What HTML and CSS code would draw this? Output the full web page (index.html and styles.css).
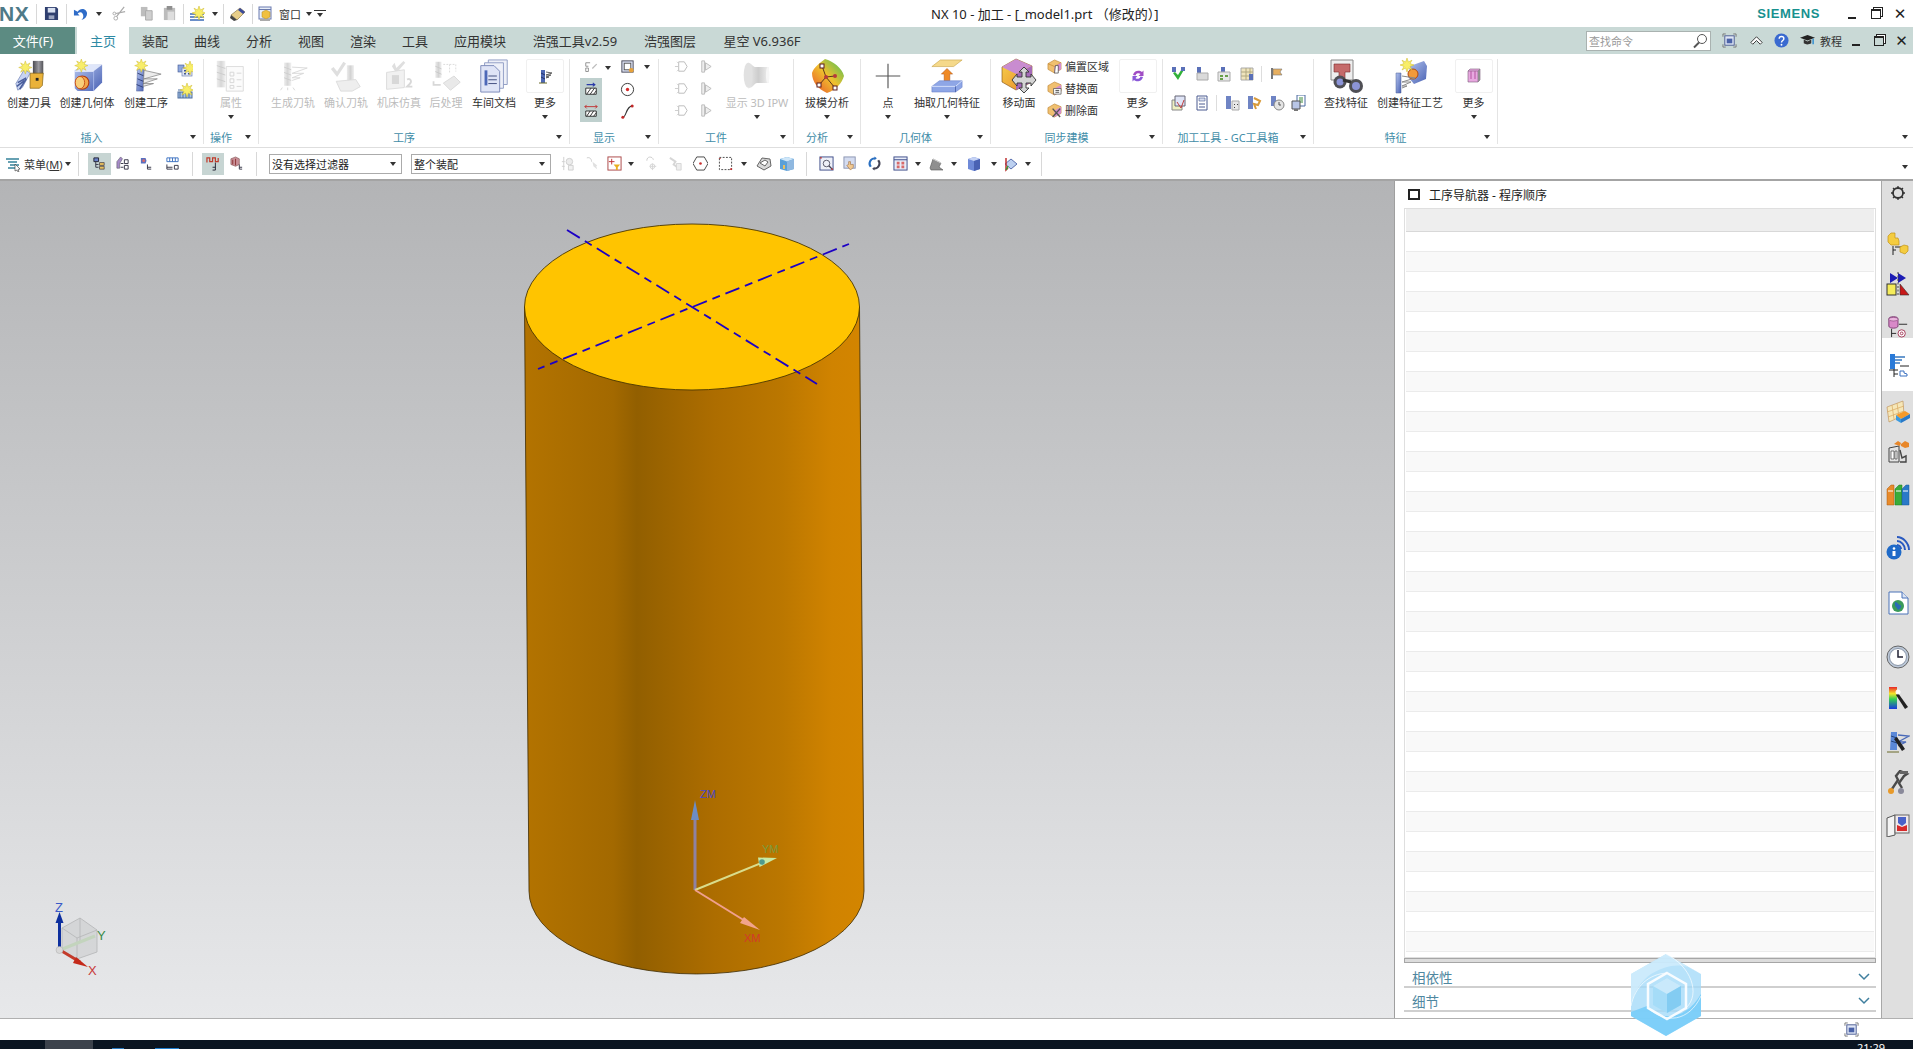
FILE: index.html
```html
<!DOCTYPE html>
<html lang="zh">
<head>
<meta charset="utf-8">
<title>NX 10</title>
<link rel="stylesheet" href="styles.css">
</head>
<body>
<svg class="defs" xmlns="http://www.w3.org/2000/svg">
<defs>
<linearGradient id="gb" x1="0" y1="0" x2="1" y2="1"><stop offset="0" stop-color="#b4c4ee"/><stop offset="1" stop-color="#4a62b4"/></linearGradient>
<linearGradient id="gg" x1="0" y1="0" x2="1" y2="0"><stop offset="0" stop-color="#e2e2e2"/><stop offset=".5" stop-color="#bcbcbc"/><stop offset="1" stop-color="#e8e8e8"/></linearGradient>
<linearGradient id="gd" x1="0" y1="0" x2="1" y2="0"><stop offset="0" stop-color="#4a4a50"/><stop offset=".55" stop-color="#9a9aa0"/><stop offset="1" stop-color="#55555a"/></linearGradient>
<linearGradient id="gr" x1="0" y1="1" x2="1" y2="0"><stop offset="0" stop-color="#e8502a"/><stop offset=".5" stop-color="#f0c02e"/><stop offset="1" stop-color="#3fc05a"/></linearGradient>
<linearGradient id="gc" x1="0" y1="0" x2="0" y2="1"><stop offset="0" stop-color="#e8242a"/><stop offset=".3" stop-color="#f4e52a"/><stop offset=".55" stop-color="#33d052"/><stop offset="1" stop-color="#1a38e0"/></linearGradient>
<linearGradient id="go" x1="0" y1="0" x2="1" y2="1"><stop offset="0" stop-color="#f7d34a"/><stop offset="1" stop-color="#e8872a"/></linearGradient>
<linearGradient id="side" gradientUnits="userSpaceOnUse" x1="525" y1="0" x2="864" y2="0"><stop offset="0" stop-color="#b37300"/><stop offset=".26" stop-color="#a36900"/><stop offset=".33" stop-color="#925f00"/><stop offset=".56" stop-color="#ad6d00"/><stop offset=".76" stop-color="#bb7700"/><stop offset=".905" stop-color="#d08300"/><stop offset="1" stop-color="#d38500"/></linearGradient>
<linearGradient id="sky" x1="0" y1="0" x2="0" y2="1"><stop offset="0" stop-color="#b3b4b6"/><stop offset="1" stop-color="#e7e8ea"/></linearGradient>
<path id="star" d="M7 0l1.400 4L12 2.200 10 5.600 14 7l-4 1.400L12 12 8.400 10 7 14 5.600 10 2 12l2-3.600L0 7l4-1.400L2 2.200 5.600 4z" fill="#f8ee6a" stroke="#cdb92a" stroke-width=".5"/>
</defs>
<symbol id="tool" viewBox="0 0 36 36"><rect x="20" y="2" width="11" height="14" fill="url(#gd)"/><path d="M17 15h14l-1 13-3 3H17z" fill="#eab23a" stroke="#7d5c10" stroke-width=".7"/><rect x="23" y="20" width="3" height="3" fill="#222"/><path d="M4 33l-2-7 9-15 6 4-8 15z" fill="#c8d4f2" stroke="#5a6ea8" stroke-width=".6"/><path d="M4 25l9-5M3 29l8-6M6 32l7-11" stroke="#4a5e9c" stroke-width="1.700" fill="none"/><use href="#star" x="5" y="2" width="14" height="14"/></symbol>
<symbol id="geom" viewBox="0 0 36 36"><path d="M5 12l10-6h19v19l-9 9H8l-3-3z" fill="url(#gb)"/><path d="M5 13l9-7h20l-9 7z" fill="#dfe6fa"/><path d="M25 13v21" stroke="#a6b6e8"/><path d="M5 13h20" stroke="#eef2ff"/><ellipse cx="13" cy="25" rx="7" ry="7" fill="#f4a84a" stroke="#b03a10" stroke-width="1.200"/><ellipse cx="10.500" cy="25" rx="5" ry="6.500" fill="#f9cf7a" stroke="#c8501a"/><use href="#star" x="5" y="0" width="14" height="14"/></symbol>
<symbol id="oper" viewBox="0 0 36 36"><path d="M9 11h7l-1 23H8z" fill="url(#gb)" stroke="#4a5c96" stroke-width=".5"/><path d="M9 15l7 3M9 21l7 3M8 27l7 3" stroke="#2f3f78"/><path d="M16 12l18 4-18 5 14 0-15 5 11 0-11 3z" fill="#ececec" stroke="#777" stroke-width=".7"/><use href="#star" x="6" y="0" width="14" height="14"/></symbol>
<symbol id="prop" viewBox="0 0 36 36" opacity=".6"><path d="M3 2h9v28H3z" fill="url(#gg)"/><path d="M3 7l9 3M3 14l9 3M3 21l9 3" stroke="#aaa"/><path d="M13 8h18v26H13z" fill="#fafafa" stroke="#c4c4c4"/><path d="M17 14h4v4h-4zM24 15h5M17 21h4v4h-4zM24 22h5M17 28h4v3h-4zM24 29h5" stroke="#bbb" fill="none"/></symbol>
<symbol id="gen" viewBox="0 0 36 36" opacity=".6"><path d="M8 3h8v26H8z" fill="url(#gg)"/><path d="M8 8l8 3M8 14l8 3M8 20l8 3" stroke="#aaa"/><path d="M17 8l17 1-17 6 13 0-13 5 9 0-9 3" fill="none" stroke="#bdbdbd"/><path d="M6 31l-2 3M12 31v3M18 31l2 3" stroke="#bbb"/></symbol>
<symbol id="ver" viewBox="0 0 36 36" opacity=".65"><path d="M4 8l4 5 7-11 3 2-10 15-7-9z" fill="#cfcfcf"/><path d="M19 6h8v20h-8z" fill="url(#gg)"/><path d="M7 24l22-2 5 8-9 5H12z" fill="#e6e6e6" stroke="#c8c8c8"/></symbol>
<symbol id="sim" viewBox="0 0 36 36" opacity=".65"><path d="M13 3l2 6 8-8 2 2-10 12-5-8z" fill="#cfcfcf"/><path d="M4 14l20-3v20L4 33z" fill="#ebebeb" stroke="#c8c8c8"/><path d="M10 17h8v10h-8z" fill="#c4c4c4"/><path d="M27 22c4-2 6 2 3 5l-3 3h6" stroke="#c4c4c4" stroke-width="2" fill="none"/></symbol>
<symbol id="post" viewBox="0 0 36 36" opacity=".65"><path d="M6 2h7v18H6z" fill="url(#gg)"/><path d="M6 7l7 3M6 13l7 3" stroke="#aaa"/><path d="M15 5h14M22 5v10M29 5v8" stroke="#c6c6c6" stroke-dasharray="2 1.500" fill="none"/><path d="M4 24v4l8 0" stroke="#c4c4c4" stroke-width="2" fill="none"/><path d="M15 26l12-8 7 7-11 9z" fill="#dedede" stroke="#c4c4c4"/></symbol>
<symbol id="doc" viewBox="0 0 36 36"><path d="M12 1h20v26H12z" fill="#eef0f8" stroke="#8f9cc4"/><path d="M8 4h20v27H8z" fill="#eef0f8" stroke="#8f9cc4"/><path d="M4 7h14l6 6v22H4z" fill="#dfe4f6" stroke="#7a88b8"/><path d="M8 12h3v16H8z" fill="#4d68b8"/><path d="M12 18h9M12 22h9M12 26h9" stroke="#3e4a7c"/></symbol>
<symbol id="more" viewBox="0 0 16 16"><path d="M4 2h4v13H4z" fill="#4e68b4"/><path d="M4 5l4 2M4 9l4 2" stroke="#24346c"/><path d="M9 4l6 1-6 2h5l-5 2h3l-3 1" stroke="#555" fill="none" stroke-width=".9"/><path d="M2 15h8" stroke="#6a6a2a"/></symbol>
<symbol id="ipw" viewBox="0 0 36 36" opacity=".75"><path d="M8 3c4 0 5 5 9 5h14v18H18c-3 0-5 6-10 6z" fill="url(#gg)"/><ellipse cx="8" cy="17" rx="5" ry="14" fill="#d8d8d8"/><ellipse cx="30" cy="17" rx="2" ry="9" fill="#f3f3f3"/></symbol>
<symbol id="draft" viewBox="0 0 36 36"><path d="M16 1c8 2 17 9 19 17-2 7-8 14-17 17C9 31 3 24 3 15 5 9 11 5 16 1z" fill="url(#gr)"/><path d="M13 8l4 11-7 8M17 19l9 11M17 19l9-1" fill="none" stroke="#4a2a1a" stroke-width=".9"/><rect x="11" y="6" width="4" height="4" fill="#fff" stroke="#5a1f1f"/><circle cx="26" cy="18" r="2" fill="#b83a3a"/><circle cx="17" cy="19" r="2" fill="#b83a3a"/><rect x="24" y="28" width="4" height="4" fill="#fff" stroke="#5a1f1f"/><rect x="8" y="25" width="4" height="4" fill="#fff" stroke="#5a1f1f"/></symbol>
<symbol id="point" viewBox="0 0 36 36"><path d="M18 5v26M5 18h26" stroke="#555" stroke-width="1.200"/></symbol>
<symbol id="extract" viewBox="0 0 36 36"><path d="M2 8l9-7h23l-9 7z" fill="#f5d98a" stroke="#c4a040" stroke-width=".6"/><path d="M18 10l6 6h-3v7h-6v-7h-3z" fill="#f08a24" stroke="#a84c10" stroke-width=".5"/><path d="M2 29l8-6h24v7l-7 5H2z" fill="#8ea6e6" stroke="#5a72c0" stroke-width=".5"/><path d="M2 29h25l7-6" fill="none" stroke="#d6e0fa"/><path d="M27 29v6" stroke="#5067b0"/></symbol>
<symbol id="moveface" viewBox="0 0 36 36"><path d="M15 1l16 7v16L15 32 1 24V9z" fill="url(#go)" stroke="#7a4a10" stroke-width=".6"/><path d="M15 1l16 7-16 8L1 9z" fill="#c98cd0"/><path d="M31 8v16L15 32V16z" fill="#a56ab8"/><path d="M23 9l5 5h-3v5h5v-3l5 6-5 6v-3h-5v5h3l-5 5-5-5h3v-5h-5v3l-5-6 5-6v3h5v-5h-3z" fill="#d4d4d4" stroke="#333" stroke-width=".9"/></symbol>
<symbol id="refresh" viewBox="0 0 16 16"><path d="M3 7a5.500 5.500 0 0 1 9-3l1.500-1.500V8H8.500l2-2a3 3 0 0 0-5 1.500z" fill="#a04cc4"/><path d="M13 9a5.500 5.500 0 0 1-9 3l-1.500 1.500V8h5l-2 2a3 3 0 0 0 5-1.500z" fill="#8a58d8"/></symbol>
<symbol id="find" viewBox="0 0 36 36"><path d="M3 2h22v20H3z" fill="#eee" stroke="#888"/><path d="M6 6h16v8h-5v8h-6v-8H6z" fill="#c56a6a" stroke="#7a2a2a" stroke-width=".6"/><circle cx="12" cy="24" r="6.500" fill="#4f4f55"/><circle cx="28" cy="28" r="7" fill="#4f4f55"/><circle cx="28" cy="28" r="4" fill="#8c94d8"/><circle cx="12" cy="24" r="3.500" fill="#8c94d8"/><path d="M15 22l8 2" stroke="#333" stroke-width="3"/></symbol>
<symbol id="featp" viewBox="0 0 36 36"><path d="M18 8l14-5 3 5-1 13-12 5-6-7z" fill="url(#gb)"/><circle cx="21" cy="16" r="5" fill="#f29a3a" stroke="#b04a10"/><path d="M4 15h5v20H4z" fill="url(#gb)" stroke="#4a5c96" stroke-width=".5"/><path d="M10 18l13 2-13 4 9 0-9 4 5 0-5 2" fill="none" stroke="#8a8a8a"/><use href="#star" x="8" y="0" width="13" height="13"/></symbol>
<symbol id="purple" viewBox="0 0 16 16"><path d="M2 3l2-2h10v11l-2 2H2z" fill="#e8a8e0" stroke="#7a5a7a" stroke-width=".6"/><path d="M12 3v11M2 3h10l2-2" stroke="#7a5a7a" fill="none" stroke-width=".6"/><path d="M12 3l2-2v11l-2 2z" fill="#8f8f8f"/><path d="M5 3v8M9 3v8" stroke="#b455a0"/></symbol>
<symbol id="s-oper" viewBox="0 0 16 16"><rect x="1" y="4" width="6" height="7" fill="#8fa8de" stroke="#3e558f" stroke-width=".6"/><rect x="5" y="7" width="10" height="8" fill="#dfe6f6" stroke="#6f80b0" stroke-width=".7"/><path d="M7 9h2v1.500H7zM11 9h2v1.500h-2zM7 12h2v1.500H7zM11 12h2v1.500h-2z" fill="#3e558f"/><use href="#star" x="6" y="0" width="9" height="9"/></symbol>
<symbol id="s-prog" viewBox="0 0 16 16"><rect x="1" y="9" width="14" height="6" fill="#a8c6e8" stroke="#4f6f9f"/><path d="M3 9v6M6 9v6M9 9v6M12 9v6" stroke="#4f6f9f"/><path d="M1 7h14" stroke="#4f6f9f"/><use href="#star" x="3" y="0" width="9" height="9"/></symbol>
<symbol id="d-a" viewBox="0 0 16 16"><path d="M2 2h5M2 2v4h3M2 8h3v4H2z" stroke="#888" fill="none"/><path d="M9 8l5-5 1 1-5 5z" fill="#bbb"/></symbol>
<symbol id="d-b" viewBox="0 0 16 16"><rect x="2" y="2" width="12" height="12" fill="#dce2f4" stroke="#445"/><rect x="4.500" y="4.500" width="7" height="7" fill="#fff" stroke="#555"/><circle cx="12" cy="12" r="2.500" fill="#e7a23a"/></symbol>
<symbol id="d-hatch" viewBox="0 0 16 16"><path d="M2 7h12v7H2z" fill="#fff" stroke="#222"/><path d="M3 14l5-7M7 14l5-7M11 14l3-4" stroke="#222"/><path d="M3 3h9m-2-2l2.500 2L10 5" stroke="#2a3aa8" fill="none" stroke-width="1.200"/></symbol>
<symbol id="d-hatch2" viewBox="0 0 16 16"><path d="M2 8h12v6H2z" fill="#fff" stroke="#222"/><path d="M3 14l4-6M7 14l4-6M11 14l3-4" stroke="#222"/><path d="M1 3h14M3 1L1 3l2 2M13 1l2 2-2 2" stroke="#c02828" fill="none"/></symbol>
<symbol id="d-c" viewBox="0 0 16 16"><circle cx="8" cy="8" r="6.500" fill="#fff" stroke="#333"/><circle cx="8" cy="8" r="1.800" fill="#d62a2a"/></symbol>
<symbol id="d-d" viewBox="0 0 16 16"><path d="M3 14c4 0 3-11 10-12" fill="none" stroke="#333" stroke-width="1.200"/><circle cx="3" cy="14" r="1.600" fill="#c02828"/><circle cx="13" cy="2" r="1.600" fill="#c02828"/></symbol>
<symbol id="w-a" viewBox="0 0 16 16"><path d="M5 3h6l3 5-3 5H5z" fill="#fff" stroke="#bbb"/><path d="M1 8h4M3 3l1 1M3 13l1-1" stroke="#ccc"/></symbol>
<symbol id="w-b" viewBox="0 0 16 16"><path d="M4 2h3v12H4zM8 4l6 4-6 4z" fill="#eee" stroke="#bbb"/></symbol>
<symbol id="o-a" viewBox="0 0 16 16"><path d="M1 5l7-4 7 3v7l-7 4-7-4z" fill="#f0c070" stroke="#b87a22" stroke-width=".6"/><path d="M1 5l7 3 7-4" stroke="#b87a22" fill="none" stroke-width=".6"/><path d="M8 8v7l7-4V4z" fill="#d48ccf"/><path d="M9 7h3v8H8z" fill="#fff" stroke="#333" stroke-width=".7"/></symbol>
<symbol id="o-b" viewBox="0 0 16 16"><path d="M1 5l7-4 7 3v7l-7 4-7-4z" fill="#f0c070" stroke="#b87a22" stroke-width=".6"/><path d="M8 8l7-4v7l-7 4z" fill="#d48ccf"/><path d="M7 8h8v6H7z" fill="#fff" stroke="#444" stroke-width=".7"/><path d="M9 10h4M9 12h4" stroke="#444"/></symbol>
<symbol id="o-c" viewBox="0 0 16 16"><path d="M1 5l7-4 7 3v7l-7 4-7-4z" fill="#f0c070" stroke="#b87a22" stroke-width=".6"/><path d="M8 8l7-4v7l-7 4z" fill="#d48ccf"/><path d="M6 6l8 9M14 6l-8 9" stroke="#555" stroke-width="1.500"/></symbol>
<symbol id="gc-v" viewBox="0 0 16 16"><path d="M2 7l5 7 7-12-2-1-5 8-3-3z" fill="#32b13a"/><path d="M1 1h4v5H1zM10 1h4v4h-4z" fill="#5a70b8"/></symbol>
<symbol id="gc-a" viewBox="0 0 16 16"><path d="M3 1h4v7H3z" fill="#5a70b8"/><path d="M3 7h11v7H3z" fill="#dadada" stroke="#aaa"/></symbol>
<symbol id="gc-b" viewBox="0 0 16 16"><path d="M5 1h4v6H5z" fill="#5a70b8"/><path d="M2 6h12v9H2z" fill="#e8e8e8" stroke="#aaa"/><path d="M4 9h3v2H4zM9 9h3v2H9zM4 12h3v2H4z" fill="#6aa04a"/></symbol>
<symbol id="gc-c" viewBox="0 0 16 16"><path d="M2 2h12v12H2z" fill="#efe4bc" stroke="#aaa"/><path d="M2 6h12M2 10h12M7 2v12M11 2v12" stroke="#b0a880"/><path d="M10 8h4v6h-4z" fill="#5a70b8"/></symbol>
<symbol id="gc-d" viewBox="0 0 16 16"><path d="M2 2h2v11H2z" fill="#777"/><path d="M4 3h9l-2 3 2 3H4z" fill="#e8b060" stroke="#777" stroke-width=".6"/></symbol>
<symbol id="gc-e" viewBox="0 0 16 16"><path d="M1 5h10v10H1z" fill="#eef0c0" stroke="#888"/><path d="M4 1h10v10H4z" fill="#dfe4f6" stroke="#667"/><path d="M6 7l4 6 3-8" stroke="#c04040" fill="none"/></symbol>
<symbol id="gc-f" viewBox="0 0 16 16"><path d="M3 1h10v14H3z" fill="#fff" stroke="#4a5a90"/><path d="M5 3h6v3H5z" fill="#d8def0" stroke="#4a5a90" stroke-width=".6"/><path d="M5 9h6M5 12h6" stroke="#4a5a90"/></symbol>
<symbol id="gc-g" viewBox="0 0 16 16"><path d="M2 1h5v13H2z" fill="#6f84c4"/><path d="M8 6h7v9H8z" fill="#e8e8e8" stroke="#aaa"/><path d="M10 9h1v1h-1zM13 9h1v1h-1zM10 12h1v1h-1z" fill="#444"/></symbol>
<symbol id="gc-h" viewBox="0 0 16 16"><path d="M2 1h5v13H2z" fill="#6f84c4"/><path d="M8 3l6 3-2 4-4-1 2 5" stroke="#d89a3a" stroke-width="2" fill="none"/></symbol>
<symbol id="gc-i" viewBox="0 0 16 16"><path d="M2 1h5v10H2z" fill="#6f84c4"/><circle cx="10" cy="10" r="5" fill="#e4e4e4" stroke="#888"/><path d="M10 7v3h2" stroke="#555" fill="none"/></symbol>
<symbol id="gc-j" viewBox="0 0 16 16"><path d="M6 0h8v11H6z" fill="#fff" stroke="#4a6aa0"/><path d="M8 3h4M8 5h4M8 7h4" stroke="#3a8a3a"/><path d="M1 6h8v8H1z" fill="#b9c6e6" stroke="#555"/><path d="M3 14h4v2H3z" fill="#777"/></symbol>
<symbol id="t-menu" viewBox="0 0 16 16"><path d="M1 3h13M3 6h9M5 9h9M3 12h7" stroke="#36839a" stroke-width="1.300"/><path d="M10 8l5 5-2 .5 1 2-1 .5-1-2-2 1z" fill="#fff" stroke="#333" stroke-width=".6"/></symbol>
<symbol id="t-a" viewBox="0 0 16 16"><path d="M2 2h5v4H2z" fill="#6a82c8" stroke="#223"/><path d="M4 6v6h3M4 9h3" stroke="#334" fill="none"/><path d="M8 7h5v3H8zM8 11h5v3H8z" fill="#e8c060" stroke="#334" stroke-width=".7"/></symbol>
<symbol id="t-b" viewBox="0 0 16 16"><path d="M2 6l4-5 2 2-3 5v5H2z" fill="#a68ac8" stroke="#556" stroke-width=".6"/><path d="M6 8h3M6 12h3" stroke="#334"/><path d="M10 4h4v4h-4zM10 10h4v4h-4z" fill="#fff" stroke="#334"/></symbol>
<symbol id="t-c" viewBox="0 0 16 16"><path d="M2 2h5l1 3-1 3H2z" fill="#5a70c0"/><circle cx="5" cy="5" r="1.500" fill="#d86a6a"/><path d="M9 9v5h4M9 12h4" stroke="#334" fill="none"/></symbol>
<symbol id="t-d" viewBox="0 0 16 16"><path d="M2 2h12M2 2v4h12V2M5 2v4M8 2v4M11 2v4" fill="none" stroke="#3a70c0"/><path d="M2 9v5h6M2 12h6" stroke="#334" fill="none"/><path d="M10 10h4v4h-4z" fill="#fff" stroke="#334"/></symbol>
<symbol id="t-e" viewBox="0 0 16 16"><path d="M1 7V2h3v4h3V2h3v4h3V2" stroke="#c03a2a" stroke-width="1.300" fill="none"/><path d="M10 7v8M7 12h3M7 15h3" stroke="#223" fill="none"/></symbol>
<symbol id="t-f" viewBox="0 0 16 16"><path d="M2 3l5-2 4 2v6l-4 2-5-2z" fill="#c99098" stroke="#7a4a4a" stroke-width=".6"/><path d="M4 4v5M7 3v7" stroke="#8a3030"/><path d="M11 9v5h3M11 12h3" stroke="#334" fill="none"/></symbol>
<symbol id="t-g" viewBox="0 0 16 16" opacity=".55"><path d="M4 1v14M2 6h3M2 11h3" stroke="#aaa" fill="none"/><circle cx="10" cy="6" r="3.500" fill="#ddd" stroke="#aaa"/><path d="M9 10h5v5H9z" fill="#e6e6e6" stroke="#aaa"/></symbol>
<symbol id="t-h" viewBox="0 0 16 16" opacity=".6"><path d="M2 2c3-1 5 1 5 4" stroke="#aaa" fill="none"/><path d="M8 6l5 4-1 1 1 3-4-3z" fill="#ccc"/></symbol>
<symbol id="t-i" viewBox="0 0 16 16"><rect x="1" y="1" width="14" height="14" fill="#fff" stroke="#a44"/><path d="M5 3v6M2 6h6" stroke="#c03030"/><path d="M7 9h7l-2.500 3v3h-2v-3z" fill="#e8b020"/></symbol>
<symbol id="t-j" viewBox="0 0 16 16" opacity=".6"><path d="M3 5c0-5 6-5 7-1" stroke="#aaa" fill="none"/><path d="M9 8v7M6 11h7" stroke="#bbb"/><circle cx="9" cy="11" r="2.500" fill="none" stroke="#bbb"/></symbol>
<symbol id="t-k" viewBox="0 0 16 16" opacity=".6"><path d="M2 2l6 4-2 3 4 3" stroke="#bbb" fill="none" stroke-width="2"/><path d="M9 8h5v7H9z" fill="#e4e4e4" stroke="#bbb"/></symbol>
<symbol id="t-l" viewBox="0 0 16 16"><path d="M4 1h8l4 7-4 7H4L0 8z" fill="#fff" stroke="#444"/><circle cx="8" cy="8" r="1.400" fill="#c83030"/></symbol>
<symbol id="t-m" viewBox="0 0 16 16"><rect x="1.500" y="1.500" width="13" height="13" fill="none" stroke="#444" stroke-dasharray="2 1.500"/><path d="M1 2h2v1H1zM13 13h2v2h-2z" fill="#c03030"/></symbol>
<symbol id="t-n" viewBox="0 0 16 16"><path d="M1 10l5-8 8 1 1 7-7 4z" fill="#d8d8d8" stroke="#666"/><path d="M4 7l5-3 3 2-3 4z" fill="#fff" stroke="#666"/></symbol>
<symbol id="t-o" viewBox="0 0 16 16"><path d="M1 3l7-2 7 2v10l-7 2-7-2z" fill="#5aa0d8"/><path d="M1 3l7-2 7 2-7 2.500z" fill="#cfe6f8"/><path d="M8 5.500V15l7-2V3z" fill="#8fb8e0"/><path d="M4 9h2v4H4z" fill="#e8c060"/></symbol>
<symbol id="t-p" viewBox="0 0 16 16"><rect x="1" y="1" width="14" height="14" fill="#eef0f8" stroke="#3a4a88"/><circle cx="8" cy="8" r="3.500" fill="none" stroke="#556"/><path d="M10.500 10.500L14 14" stroke="#445" stroke-width="1.500"/><path d="M1 2h2M13 14h2" stroke="#c03030" stroke-width="1.500"/></symbol>
<symbol id="t-q" viewBox="0 0 16 16"><rect x="1" y="1" width="12" height="12" fill="#d4dcf0" stroke="#8a94b0"/><path d="M8 15l-4-5 2-1V6h2v3h3v3z" fill="#f0c890" stroke="#9a6a3a" stroke-width=".6"/></symbol>
<symbol id="t-r" viewBox="0 0 16 16"><path d="M3 12A6.500 6.500 0 0 1 8 1.500v-1l2.500 2L8 4.500v-1A4.500 4.500 0 0 0 5 11z" fill="#2a6fc0"/><path d="M13 4a6.500 6.500 0 0 1-5 10.500v1l-2.500-2L8 11.500v1A4.500 4.500 0 0 0 11 5z" fill="#445"/></symbol>
<symbol id="t-s" viewBox="0 0 16 16"><rect x="1" y="1" width="14" height="14" fill="#e8ecf8" stroke="#3a4a88"/><path d="M1 4h14" stroke="#3a4a88"/><path d="M4 6h3v3H4zM9 6h3v3H9zM4 10h3v3H4zM9 10h3v3H9z" fill="#d86a6a"/></symbol>
<symbol id="t-t" viewBox="0 0 16 16"><path d="M2 12l3-9 8 4-2 4 4 3H3z" fill="#8f8f8f" stroke="#555" stroke-width=".6"/><path d="M5 3l8 4" stroke="#ddd"/></symbol>
<symbol id="t-u" viewBox="0 0 16 16"><path d="M2 3l6-2 6 2v10l-6 2-6-2z" fill="#6f8ad8"/><path d="M2 3l6-2 6 2-6 2z" fill="#c5d2f4"/><path d="M8 5v10l6-2V3z" fill="#4a62b4"/></symbol>
<symbol id="t-v" viewBox="0 0 16 16"><path d="M8 3l6 5-6 5-6-5z" fill="#bcd0f0" stroke="#5a70b0"/><path d="M3 2v12l2-2" stroke="#c03030" fill="none" stroke-width="1.500"/><path d="M3 14l2-4" stroke="#3a9a3a" stroke-width="1.500"/></symbol>
<symbol id="r-gear" viewBox="0 0 16 16"><circle cx="8" cy="8" r="5" fill="none" stroke="#333" stroke-width="1.800"/><path d="M8 1v2M8 13v2M1 8h2M13 8h2M3 3l1.500 1.500M11.500 11.500L13 13M13 3l-1.500 1.500M4.500 11.500L3 13" stroke="#333" stroke-width="1.300"/></symbol>
<symbol id="r-a" viewBox="0 0 24 24"><path d="M2 5l3-3h4v5h3l1 3v4H5L2 11z" fill="#f4cc40" stroke="#c29418" stroke-width=".7"/><path d="M9 16h11M7 15v9M7 19h3" stroke="#222" fill="none"/><path d="M14 16l4-2 4 1v5l-3 3-5-2z" fill="#f4cc40" stroke="#c29418" stroke-width=".7"/></symbol>
<symbol id="r-b" viewBox="0 0 24 24"><path d="M4 1l8 5V1l8 5-8 5 0-5-8 5z" fill="#1c1cb4"/><path d="M12 0v24" stroke="#444" stroke-dasharray="2 1.500"/><rect x="1" y="12" width="9" height="11" fill="#f5ec5a" stroke="#333"/><path d="M14 23V12l9 11z" fill="#c81818" stroke="#333" stroke-width=".6"/></symbol>
<symbol id="r-c" viewBox="0 0 24 24"><path d="M2 3c0-3 10-3 10 0v8c0 3-10 3-10 0z" fill="#d889c8" stroke="#7a3a70"/><ellipse cx="7" cy="3.500" rx="5" ry="2" fill="#eab5de" stroke="#7a3a70" stroke-width=".6"/><path d="M13 9h9M5 14v9M5 19h5" stroke="#222" fill="none"/><circle cx="16" cy="19" r="4" fill="#fff" stroke="#a03050"/><circle cx="16" cy="19" r="1.500" fill="none" stroke="#a03050"/></symbol>
<symbol id="r-d" viewBox="0 0 24 24"><path d="M4 1h5v15H4z" fill="#2a7ad8"/><path d="M9 4h10M9 7l7 0M9 10h5" stroke="#3a7ac0" stroke-width="1.500"/><path d="M3 17h9M8 16v8M8 21h4" stroke="#222" fill="none"/><path d="M14 13h9" stroke="#222"/><path d="M14 18h4v2l3 1v2h-7z" fill="#fff" stroke="#3a70c0"/></symbol>
<symbol id="r-e" viewBox="0 0 24 24"><path d="M1 7L17 1l1 14-15 7z" fill="#f6e7b8" stroke="#b88a50" stroke-width=".6"/><path d="M1 12l17-6M2 17l16-6M6 5l2 14M11 3l2 14" stroke="#d8a860" stroke-width=".7"/><path d="M10 15l9-4 5 3-9 5z" fill="#f59a2a"/><path d="M10 15l5 4v4l-5-3z" fill="#3a9ae0"/><path d="M15 19l9-5v4l-9 5z" fill="#2a7ac8"/></symbol>
<symbol id="r-f" viewBox="0 0 24 24"><path d="M3 8l10-2v16H3z" fill="#e4e4e4" stroke="#444"/><path d="M5 11h3v8H5zM9 11h2v8H9z" fill="#fff" stroke="#444" stroke-width=".7"/><path d="M14 10l2 8 4-2v6h-6" fill="none" stroke="#444" stroke-width="1.400"/><path d="M8 4l4-3 3 2-1 3zM15 4l4-3 4 2v4l-4 1-4-2z" fill="#e8872a"/></symbol>
<symbol id="r-g" viewBox="0 0 24 24"><path d="M1 6l4-4h3v20H1z" fill="#e88a2a" stroke="#a85a10" stroke-width=".5"/><path d="M9 6l4-4h3v20H9z" fill="#3aac3a" stroke="#1a7a1a" stroke-width=".5"/><path d="M16 6l4-4h3v20h-7z" fill="#2a7ac8" stroke="#1a5a98" stroke-width=".5"/><path d="M2 8h5M10 8h5M17 8h5" stroke="#fff"/></symbol>
<symbol id="r-h" viewBox="0 0 24 24"><path d="M11 1c6 0 12 6 12 13M11 5c4 0 8 4 8 9M11 9c2 0 4 2 4 4" stroke="#2a5ac0" stroke-width="2" fill="none"/><circle cx="8" cy="16" r="7.500" fill="#1f6ac8"/><circle cx="8" cy="12.500" r="1.300" fill="#fff"/><path d="M6.500 15h3v5h-3z" fill="#fff"/></symbol>
<symbol id="r-i" viewBox="0 0 24 24"><path d="M3 1h13l6 6v16H3z" fill="#fff" stroke="#4a72b8"/><path d="M16 1v6h6" fill="#dbe4f4" stroke="#4a72b8"/><circle cx="12" cy="15" r="6" fill="#3a9a5a"/><path d="M9 11c3 0 3 3 5 3s1 4-2 5c-1-3-4-3-3-8z" fill="#2a6ab8"/></symbol>
<symbol id="r-j" viewBox="0 0 24 24"><circle cx="12" cy="12" r="11" fill="#bcc8d8" stroke="#666"/><circle cx="12" cy="12" r="8.500" fill="#fff" stroke="#8a96a8"/><path d="M12 5v7h5" stroke="#223" stroke-width="1.500" fill="none"/></symbol>
<symbol id="r-k" viewBox="0 0 24 24"><rect x="3" y="1" width="8" height="22" fill="url(#gc)"/><path d="M12 7l10 14-3 2L10 9z" fill="#222"/><circle cx="12" cy="6" r="2.500" fill="#fff" opacity=".9"/></symbol>
<symbol id="r-l" viewBox="0 0 24 24"><path d="M5 2h6v18H4z" fill="#5a88d8"/><path d="M5 6l6 2M5 11l6 2" stroke="#24447c"/><path d="M12 5l11 1-11 6h8l-8 4" stroke="#4a6ab8" fill="none" stroke-width="1.300"/><path d="M11 7l8 12-3 2-8-12z" fill="#222"/><path d="M1 22h12" stroke="#6a6a2a"/></symbol>
<symbol id="r-m" viewBox="0 0 24 24"><path d="M4 22l8-12-2-4 4-5 7 3-3 2-5 7 3 5" stroke="#4a4a4a" stroke-width="2.400" fill="none"/><circle cx="5" cy="21" r="3" fill="#e89a2a"/><circle cx="15" cy="21" r="3" fill="#8a8a9a"/><path d="M14 1h8v3h-8z" fill="#666"/></symbol>
<symbol id="r-n" viewBox="0 0 24 24"><path d="M1 5l8-3v20l-8 2z" fill="#f4f4f4" stroke="#555"/><rect x="9" y="2" width="14" height="18" fill="#f0e8e8" stroke="#666"/><path d="M12 4h8v6l-4 3-4-3z" fill="#4a62c8"/><path d="M11 12l5 2 5-2v6H11z" fill="#d82a2a"/></symbol>
<symbol id="q-save" viewBox="0 0 16 16"><path d="M1 1h12l2 2v12H1z" fill="#2f3f6f"/><rect x="4" y="2" width="8" height="5" fill="#d8e0f0"/><rect x="5" y="10" width="6" height="4" fill="#9aa4c0"/></symbol>
<symbol id="q-undo" viewBox="0 0 16 16"><path d="M1 4v6h6L5 8c3-3 6-1 6 3 0 2-1 3-2 4 4-1 6-4 6-7 0-5-7-7-10-2z" fill="#2e6cc8"/></symbol>
<symbol id="q-cut" viewBox="0 0 16 16"><path d="M13 1L5 11M14 6L4 8" stroke="#aaa" stroke-width="1.300"/><circle cx="4" cy="13" r="2" fill="none" stroke="#aaa"/><circle cx="2.500" cy="8" r="1.500" fill="none" stroke="#aaa"/></symbol>
<symbol id="q-copy" viewBox="0 0 16 16"><path d="M2 1h7v10H2z" fill="#bdbdbd"/><path d="M7 5h7v10H7z" fill="#cfcfcf" stroke="#aaa"/></symbol>
<symbol id="q-paste" viewBox="0 0 16 16"><path d="M2 2h12v13H2z" fill="#bcbcbc"/><rect x="5" y="0" width="6" height="4" fill="#8f8f8f"/><path d="M6 6h7v9H6z" fill="#dedede"/></symbol>
<symbol id="q-star" viewBox="0 0 16 16"><path d="M1 8h14M1 11h14M1 14h14" stroke="#3a6ab8" stroke-width="1.500"/><use href="#star" x="3" y="0" width="11" height="11"/></symbol>
<symbol id="q-pen" viewBox="0 0 16 16"><path d="M1 9l9-7 5 4-8 8z" fill="#e8cf8a" stroke="#7a6a3a" stroke-width=".6"/><path d="M10 2l5 4-2 2-5-4z" fill="#3a4a9a"/><path d="M1 9l6 5-3 1-4-3z" fill="#444"/></symbol>
<symbol id="q-win" viewBox="0 0 16 16"><rect x="1" y="1" width="12" height="12" fill="#e8eef8" stroke="#6a7ab0"/><path d="M1 3.500h12" stroke="#6a7ab0"/><path d="M4 6l4-2 4 2v5l-4 2-4-2z" fill="#f0c040" stroke="#b08a20" stroke-width=".5"/><rect x="2" y="13" width="10" height="2" fill="#aaa"/></symbol>
<symbol id="u-search" viewBox="0 0 16 16"><circle cx="10" cy="6" r="4.500" fill="#fff" stroke="#555"/><path d="M7 9.500L2 14.500" stroke="#555" stroke-width="2"/></symbol>
<symbol id="u-view" viewBox="0 0 16 16"><path d="M1 4V1h3M12 1h3v3M15 12v3h-3M4 15H1v-3" fill="none" stroke="#777"/><rect x="3" y="3" width="10" height="10" fill="#dfe6f6" stroke="#4a5a90"/><rect x="5" y="6" width="6" height="5" fill="#4a62a8"/></symbol>
<symbol id="u-up" viewBox="0 0 16 16"><path d="M2 10l6-6 6 6-2 2-4-4-4 4z" fill="#fff" stroke="#333"/></symbol>
<symbol id="u-help" viewBox="0 0 16 16"><circle cx="8" cy="8" r="7.500" fill="#3a6ad0"/><path d="M5.500 6c0-3 5-3 5 0 0 2-2.500 2-2.500 4" fill="none" stroke="#fff" stroke-width="1.500"/><circle cx="8" cy="12.500" r="1" fill="#fff"/></symbol>
<symbol id="u-hat" viewBox="0 0 16 16"><path d="M0 5l8-3 8 3-8 3z" fill="#222"/><path d="M4 7v4c3 2 6 1 8 0V7L8 9z" fill="#333"/><path d="M14 6v6" stroke="#2a8ad0" stroke-width="1.500"/></symbol>
</svg>

<div class="app">
  <header class="titlebar">
    <div class="nx">NX</div>
    <span class="qsep ml3"></span>
    <span class="qi w29"><svg class="i15"><use href="#q-save"/></svg></span>
    <span class="qsep"></span>
    <span class="qi w27"><svg class="i15"><use href="#q-undo"/></svg></span><span class="caret w10"></span>
    <span class="qi w30"><svg class="i15"><use href="#q-cut"/></svg></span>
    <span class="qi w24"><svg class="i15"><use href="#q-copy"/></svg></span>
    <span class="qi w22"><svg class="i15"><use href="#q-paste"/></svg></span>
    <span class="qsep ml3"></span>
    <span class="qi w26"><svg class="i16"><use href="#q-star"/></svg></span><span class="caret w10"></span>
    <span class="qsep ml3"></span>
    <span class="qi w28"><svg class="i16"><use href="#q-pen"/></svg></span>
    <span class="qsep"></span>
    <span class="qi w26"><svg class="i16"><use href="#q-win"/></svg></span>
    <span class="qtext">窗口</span><span class="caret w10 ml2"></span><span class="qmenu w12"></span>
    <div class="doctitle">NX 10 - 加工 - [_model1.prt （修改的）]</div>
    <div class="siemens">SIEMENS</div>
    <div class="winbtns">
      <span class="wb wmin"></span>
      <span class="wb"><span class="wmax"></span></span>
      <span class="wb wclose">✕</span>
    </div>
  </header>

  <nav class="tabs">
    <div class="tab file">文件(F)</div>
    <div class="tab active w52">主页</div>
    <div class="tab w52">装配</div>
    <div class="tab w52">曲线</div>
    <div class="tab w52">分析</div>
    <div class="tab w52">视图</div>
    <div class="tab w52">渲染</div>
    <div class="tab w52">工具</div>
    <div class="tab w78">应用模块</div>
    <div class="tab w112">浩强工具v2.59</div>
    <div class="tab w78">浩强图层</div>
    <div class="tab w106">星空 V6.936F</div>
    <div class="tabright">
      <div class="search"><span>查找命令</span><svg class="i16"><use href="#u-search"/></svg></div>
      <svg class="i15 ml11"><use href="#u-view"/></svg>
      <svg class="i15 ml12"><use href="#u-up"/></svg>
      <svg class="i15 ml10"><use href="#u-help"/></svg>
      <svg class="i15 ml11"><use href="#u-hat"/></svg>
      <span class="tut">教程</span>
      <div class="winbtns tabwin">
        <span class="wb wmin"></span>
        <span class="wb"><span class="wmax"></span></span>
        <span class="wb wclose">✕</span>
      </div>
    </div>
  </nav>

  <section class="ribbon">
    <div class="group g1">
      <div class="gbody">
        <div class="big w58"><div class="bi"><svg class="i34 nudge"><use href="#tool"/></svg></div><div class="bl">创建刀具</div></div>
        <div class="big w58"><div class="bi"><svg class="i34"><use href="#geom"/></svg></div><div class="bl">创建几何体</div></div>
        <div class="big w60"><div class="bi"><svg class="i34"><use href="#oper"/></svg></div><div class="bl">创建工序</div></div>
        <div class="col w18"><svg class="i16 pt2"><use href="#s-oper"/></svg><svg class="i16 mt10"><use href="#s-prog"/></svg></div>
      </div>
      <div class="glabel"><span>插入</span><i class="caret w20"></i></div>
    </div>
    <div class="group g2">
      <div class="gbody">
        <div class="big wfull dis"><div class="bi"><svg class="i34"><use href="#prop"/></svg></div><div class="bl">属性</div><i class="caret"></i></div>
      </div>
      <div class="glabel"><span>操作</span><i class="caret w20"></i></div>
    </div>
    <div class="group g3">
      <div class="gbody pl8">
        <div class="big w52 dis"><div class="bi"><svg class="i32"><use href="#gen"/></svg></div><div class="bl">生成刀轨</div></div>
        <div class="big w54 dis"><div class="bi"><svg class="i32"><use href="#ver"/></svg></div><div class="bl">确认刀轨</div></div>
        <div class="big w52 dis"><div class="bi"><svg class="i32"><use href="#sim"/></svg></div><div class="bl">机床仿真</div></div>
        <div class="big w42 dis"><div class="bi"><svg class="i32"><use href="#post"/></svg></div><div class="bl">后处理</div></div>
        <div class="big w54"><div class="bi"><svg class="i34"><use href="#doc"/></svg></div><div class="bl">车间文档</div></div>
        <div class="big w48"><div class="bi box"><svg class="i16"><use href="#more"/></svg></div><div class="bl">更多</div><i class="caret"></i></div>
      </div>
      <div class="glabel"><span>工序</span><i class="caret w20"></i></div>
    </div>
    <div class="group g4">
      <div class="gbody pl10">
        <div class="col w22">
          <span class="smrow h17"><svg class="i14"><use href="#d-a"/></svg></span>
          <span class="sel mt2"><svg class="i14"><use href="#d-hatch"/></svg></span>
          <span class="sel"><svg class="i14"><use href="#d-hatch2"/></svg></span>
        </div>
        <i class="caret w12 h17"></i>
        <div class="col w20 ml3">
          <span class="smrow h15"><svg class="i15"><use href="#d-b"/></svg></span>
          <span class="smrow h26 mt2"><svg class="i15"><use href="#d-c"/></svg></span>
          <span class="smrow h18"><svg class="i15"><use href="#d-d"/></svg></span>
        </div>
        <i class="caret w12 h15 ml4"></i>
      </div>
      <div class="glabel"><span>显示</span><i class="caret w20"></i></div>
    </div>
    <div class="group g5">
      <div class="gbody pl10">
        <div class="col w24 wk"><svg class="i15"><use href="#w-a"/></svg><svg class="i15"><use href="#w-a"/></svg><svg class="i15"><use href="#w-a"/></svg></div>
        <div class="col w24 wk"><svg class="i15"><use href="#w-b"/></svg><svg class="i15"><use href="#w-b"/></svg><svg class="i15"><use href="#w-b"/></svg></div>
        <div class="big w64 dis ml8"><div class="bi"><svg class="i32"><use href="#ipw"/></svg></div><div class="bl">显示 3D IPW</div><i class="caret"></i></div>
      </div>
      <div class="glabel"><span>工件</span><i class="caret w20"></i></div>
    </div>
    <div class="group g6">
      <div class="gbody">
        <div class="big wfull"><div class="bi"><svg class="i36"><use href="#draft"/></svg></div><div class="bl">拔模分析</div><i class="caret"></i></div>
      </div>
      <div class="glabel"><span>分析</span><i class="caret w20"></i></div>
    </div>
    <div class="group g7">
      <div class="gbody">
        <div class="big w54"><div class="bi"><svg class="i34"><use href="#point"/></svg></div><div class="bl">点</div><i class="caret"></i></div>
        <div class="big w64"><div class="bi"><svg class="i34"><use href="#extract"/></svg></div><div class="bl">抽取几何特征</div><i class="caret"></i></div>
      </div>
      <div class="glabel"><span>几何体</span><i class="caret w20"></i></div>
    </div>
    <div class="group g8">
      <div class="gbody">
        <div class="big w56"><div class="bi"><svg class="i36"><use href="#moveface"/></svg></div><div class="bl">移动面</div></div>
        <div class="col w66 olist">
          <div class="orow"><svg class="i15"><use href="#o-a"/></svg><span>偏置区域</span></div>
          <div class="orow"><svg class="i15"><use href="#o-b"/></svg><span>替换面</span></div>
          <div class="orow"><svg class="i15"><use href="#o-c"/></svg><span>删除面</span></div>
        </div>
        <div class="big w49"><div class="bi box"><svg class="i16"><use href="#refresh"/></svg></div><div class="bl">更多</div><i class="caret"></i></div>
      </div>
      <div class="glabel"><span>同步建模</span><i class="caret w20"></i></div>
    </div>
    <div class="group g9">
      <div class="gbody">
        <div class="gcgrid">
          <div class="gcrow"><svg class="i16"><use href="#gc-v"/></svg><svg class="i16"><use href="#gc-a"/></svg><svg class="i16"><use href="#gc-b"/></svg><svg class="i16"><use href="#gc-c"/></svg><span class="gsep"></span><svg class="i16"><use href="#gc-d"/></svg></div>
          <div class="gcrow"><svg class="i16"><use href="#gc-e"/></svg><svg class="i16"><use href="#gc-f"/></svg><span class="gsep"></span><svg class="i16"><use href="#gc-g"/></svg><svg class="i16"><use href="#gc-h"/></svg><svg class="i16"><use href="#gc-i"/></svg><svg class="i16"><use href="#gc-j"/></svg></div>
        </div>
      </div>
      <div class="glabel"><span>加工工具 - GC工具箱</span><i class="caret w20"></i></div>
    </div>
    <div class="group g10">
      <div class="gbody">
        <div class="big w64"><div class="bi"><svg class="i36"><use href="#find"/></svg></div><div class="bl">查找特征</div></div>
        <div class="big w64"><div class="bi"><svg class="i36"><use href="#featp"/></svg></div><div class="bl">创建特征工艺</div></div>
        <div class="big w49 ml7"><div class="bi box"><svg class="i16"><use href="#purple"/></svg></div><div class="bl">更多</div><i class="caret"></i></div>
      </div>
      <div class="glabel"><span>特征</span><i class="caret w20"></i></div>
    </div>
    <i class="caret w16 ribbonend"></i>
  </section>

  <section class="toolbar">
    <span class="ti w20 ml3"><svg class="i16"><use href="#t-menu"/></svg></span>
    <span class="menu ml1">菜单(<u>M</u>)</span><i class="caret w10"></i>
    <span class="tsep ml5"></span>
    <span class="ti w23 ml9 on"><svg class="i15"><use href="#t-a"/></svg></span>
    <span class="ti w23"><svg class="i15"><use href="#t-b"/></svg></span>
    <span class="ti w25"><svg class="i15"><use href="#t-c"/></svg></span>
    <span class="ti w27"><svg class="i15"><use href="#t-d"/></svg></span>
    <span class="tsep ml6"></span>
    <span class="ti w22 ml9 on"><svg class="i15"><use href="#t-e"/></svg></span>
    <span class="ti w24"><svg class="i15"><use href="#t-f"/></svg></span>
    <span class="tsep ml8"></span>
    <div class="sel-box w133 ml12"><span>没有选择过滤器</span><i class="caret w16"></i></div>
    <div class="sel-box w140 ml9"><span>整个装配</span><i class="caret w16"></i></div>
    <span class="ti w24 ml4"><svg class="i15"><use href="#t-g"/></svg></span>
    <span class="ti w26"><svg class="i15"><use href="#t-h"/></svg></span>
    <span class="ti w18"><svg class="i15"><use href="#t-i"/></svg></span>
    <i class="caret w16"></i>
    <span class="ti w24"><svg class="i15"><use href="#t-j"/></svg></span>
    <span class="ti w25"><svg class="i15"><use href="#t-k"/></svg></span>
    <span class="ti w24"><svg class="i15"><use href="#t-l"/></svg></span>
    <span class="ti w26"><svg class="i15"><use href="#t-m"/></svg></span>
    <i class="caret w12"></i>
    <span class="ti w28"><svg class="i16"><use href="#t-n"/></svg></span>
    <span class="ti w18"><svg class="i16"><use href="#t-o"/></svg></span>
    <span class="tsep ml10"></span>
    <span class="ti w24 ml7"><svg class="i15"><use href="#t-p"/></svg></span>
    <span class="ti w24"><svg class="i15"><use href="#t-q"/></svg></span>
    <span class="ti w25"><svg class="i15"><use href="#t-r"/></svg></span>
    <span class="ti w26"><svg class="i15"><use href="#t-s"/></svg></span>
    <i class="caret w10"></i>
    <span class="ti w26"><svg class="i16"><use href="#t-t"/></svg></span>
    <i class="caret w10"></i>
    <span class="ti w30"><svg class="i16"><use href="#t-u"/></svg></span>
    <i class="caret w10"></i>
    <span class="ti w24"><svg class="i16"><use href="#t-v"/></svg></span>
    <i class="caret w10"></i>
    <span class="tsep ml8"></span>
    <i class="caret w16 toolend"></i>
  </section>

  <main class="work">
    <div class="viewport">
      <svg class="scene" viewBox="0 1 1394 837" preserveAspectRatio="none">
        <rect y="0" width="1394" height="838" fill="url(#sky)"/>
        <path d="M524.500 127 L529 711 A167.500 83 0 0 0 864 711 L859.500 127 Z" fill="url(#side)" stroke="#3c2a00" stroke-width=".8"/>
        <ellipse cx="692" cy="127" rx="167.500" ry="83" fill="#ffc400" stroke="#4a3600" stroke-width=".9"/>
        <g stroke="#1c00c4" stroke-width="1.800" stroke-dasharray="15 6 8 6" fill="none">
          <path d="M567 50L817 204"/>
          <path class="dash2" d="M538 189L849 64"/>
        </g>
        <g fill="none">
          <path d="M695 710V640" stroke="#8f82a2" stroke-width="3"/>
          <path d="M695 620l-4 20h8z" fill="#6d8dc4"/>
          <path d="M695 710L764 682" stroke="#d9dd8c" stroke-width="2"/>
          <path d="M777 678l-19-.5 1.500 9.500z" fill="#c8eaa4"/>
          <circle cx="762" cy="682" r="2.800" fill="#4f9a8c"/>
          <path d="M695 710L750 744" stroke="#f0a08e" stroke-width="2"/>
          <path d="M760 750l-16-13-4 6z" fill="#f2a48c"/>
        </g>
        <g class="wcs">
          <text x="700" y="618" fill="#4a48c8">ZM</text>
          <text x="762" y="673" fill="#7d9a3c">YM</text>
          <text x="744" y="762" fill="#d23a2a">XM</text>
        </g>
        <g>
          <path d="M80 738L62 748V770L77 779L97 772V750Z" fill="#cfd0d1" fill-opacity=".7" stroke="#b4b5b6" stroke-width=".8"/>
          <path d="M62 748L77 758L97 750M77 758V779M80 738V762" fill="none" stroke="#b4b5b6" stroke-width=".8"/>
          <path d="M60 770L95 756" stroke="#c3d4bd" stroke-width="3"/>
          <path d="M59.500 768V742" stroke="#0d2f9e" stroke-width="3"/>
          <path d="M59.500 732l-4 11h8z" fill="#0d2f9e"/>
          <path d="M60 770L80 782" stroke="#c43a2a" stroke-width="3"/>
          <path d="M88 787l-12-10-3 6z" fill="#c42a1a"/>
          <circle cx="59.500" cy="770" r="3.500" fill="#d8d8d8" stroke="#aaa" stroke-width=".5"/>
        </g>
        <g class="triad">
          <text x="55" y="732" fill="#3a5ac8">Z</text>
          <text x="97" y="760" fill="#3a8a4a">Y</text>
          <text x="88" y="795" fill="#c83a3a">X</text>
        </g>
      </svg>
    </div>

    <aside class="nav">
      <div class="navhead"><span class="navbox"></span><span>工序导航器 - 程序顺序</span></div>
      <div class="navtable">
        <div class="navth"></div>
        <div class="navrows"></div>
      </div>
      <div class="navfoot"></div>
      <div class="acc"><span>相依性</span><svg class="chev" viewBox="0 0 12 8"><path d="M1 1l5 5 5-5" fill="none" stroke="#3f7f9e" stroke-width="1.500"/></svg></div>
      <div class="acc"><span>细节</span><svg class="chev" viewBox="0 0 12 8"><path d="M1 1l5 5 5-5" fill="none" stroke="#3f7f9e" stroke-width="1.500"/></svg></div>
    </aside>

    <aside class="res">
      <svg class="gear"><use href="#r-gear"/></svg>
      <svg class="ri mt26"><use href="#r-a"/></svg>
      <svg class="ri mt17"><use href="#r-b"/></svg>
      <svg class="ri h22 mt20"><use href="#r-c"/></svg>
      <div class="ractive"><svg class="ri"><use href="#r-d"/></svg></div>
      <svg class="ri mt9"><use href="#r-e"/></svg>
      <svg class="ri mt16"><use href="#r-f"/></svg>
      <svg class="ri mt19"><use href="#r-g"/></svg>
      <svg class="ri mt29"><use href="#r-h"/></svg>
      <svg class="ri mt31"><use href="#r-i"/></svg>
      <svg class="ri mt30"><use href="#r-j"/></svg>
      <svg class="ri mt17"><use href="#r-k"/></svg>
      <svg class="ri mt20"><use href="#r-l"/></svg>
      <svg class="ri mt16"><use href="#r-m"/></svg>
      <svg class="ri mt19"><use href="#r-n"/></svg>
    </aside>
  </main>

  <footer class="status"><svg class="i15"><use href="#u-view"/></svg></footer>
  <div class="taskbar"><span class="tactive"></span><span class="clock">21:29</span></div>

  <svg class="watermark" viewBox="0 0 70 82">
    <path d="M35 0L70 20V62L35 82L0 62V20Z" fill="#a3daf8" fill-opacity=".78"/>
    <path d="M35 0L66 18C54 8 36 10 20 20C10 27 3 38 0 50V20Z" fill="#d2edfc" fill-opacity=".8"/>
    <path d="M16 52C30 68 55 66 70 40V62L35 82L0 62V58Z" fill="#78cdf8" fill-opacity=".9"/>
    <path d="M36 19L55 30V54L36 65L17 54V30Z" fill="none" stroke="#fff" stroke-opacity=".9" stroke-width="2.500"/>
    <path d="M36 24L50 32V51L36 59L22 51V32Z" fill="#a5dcf8"/>
    <path d="M36 24L50 32L36 40L22 32Z" fill="#c9e9fb"/>
    <path d="M36 40L50 32V51L36 59Z" fill="#83ccf2"/>
    <path d="M35 0C60 12 70 40 55 54M0 52C4 32 18 20 36 19M70 42C58 68 34 70 17 54" fill="none" stroke="#fff" stroke-opacity=".65"/>
  </svg>
</div>
</body>
</html>
```

FILE: styles.css
```css
* { box-sizing: border-box; }
html, body { margin: 0; padding: 0; height: 100%; overflow: hidden; background: #fff; }
body { font-family: "Noto Sans", "Noto Sans CJK SC", sans-serif; font-size: 11px; color: #333; }
.defs { display: block; width: 0; height: 0; }
svg { display: block; flex: none; }
.app { position: relative; width: 1913px; height: 1049px; display: flex; flex-direction: column; overflow: hidden; }

.i14 { width: 14px; height: 14px; }
.i15 { width: 15px; height: 15px; }
.i16 { width: 16px; height: 16px; }
.i32 { width: 32px; height: 32px; }
.i34 { width: 34px; height: 34px; }
.i36 { width: 36px; height: 36px; }
.nudge { margin-left: 3px; }

.w10 { width: 10px; } .w12 { width: 12px; } .w16 { width: 16px; } .w18 { width: 18px; } .w20 { width: 20px; }
.w22 { width: 22px; } .w23 { width: 23px; } .w24 { width: 24px; } .w25 { width: 25px; } .w26 { width: 26px; }
.w27 { width: 27px; } .w28 { width: 28px; } .w29 { width: 29px; } .w30 { width: 30px; }
.w42 { width: 42px; } .w48 { width: 48px; } .w49 { width: 49px; } .w52 { width: 52px; } .w54 { width: 54px; }
.w56 { width: 56px; } .w58 { width: 58px; } .w60 { width: 60px; } .w64 { width: 64px; } .w66 { width: 66px; }
.w78 { width: 78px; } .w106 { width: 106px; } .w112 { width: 112px; } .w133 { width: 133px; } .w140 { width: 140px; }
.wfull { width: 100%; }
.ml1 { margin-left: 1px; } .ml2 { margin-left: 2px; } .ml3 { margin-left: 3px; } .ml4 { margin-left: 4px; } .ml5 { margin-left: 5px; } .ml6 { margin-left: 6px; }
.ml7 { margin-left: 7px; } .ml8 { margin-left: 8px; } .ml9 { margin-left: 9px; } .ml10 { margin-left: 10px; } .ml11 { margin-left: 11px; } .ml12 { margin-left: 12px; }
.pl8 { padding-left: 8px; } .pl10 { padding-left: 10px; } .pt2 { margin-top: 2px; }
.mt2 { margin-top: 2px; } .mt9 { margin-top: 9px; } .mt10 { margin-top: 6px; } .mt16 { margin-top: 16px; } .mt17 { margin-top: 17px; }
.mt19 { margin-top: 19px; } .mt20 { margin-top: 20px; } .mt26 { margin-top: 26px; } .mt29 { margin-top: 29px; } .mt30 { margin-top: 30px; } .mt31 { margin-top: 31px; }

.caret { display: flex; align-items: center; justify-content: center; flex: none; }
.caret::before { content: ""; border-left: 3px solid transparent; border-right: 3px solid transparent; border-top: 4px solid #333; }

/* title bar */
.titlebar { height: 27px; flex: none; display: flex; align-items: center; background: #fff; }
.nx { width: 34px; font: bold 21px "Liberation Sans", sans-serif; color: #4e7a88; letter-spacing: .5px; margin-left: -1px; }
.qsep { width: 1px; height: 20px; background: #d8d8d8; flex: none; }
.qi { display: flex; align-items: center; justify-content: center; flex: none; height: 20px; }
.qtext { width: 23px; }
.qmenu { height: 8px; border-top: 1px solid #333; display: flex; justify-content: center; }
.qmenu::after { content: ""; margin-top: 2px; border-left: 3px solid transparent; border-right: 3px solid transparent; border-top: 4px solid #333; height: 0; }
.doctitle { margin-left: 605px; font-size: 13px; color: #222; white-space: nowrap; }
.siemens { margin-left: auto; font: bold 13px "Liberation Sans", sans-serif; color: #17918f; letter-spacing: .6px; }
.winbtns { display: flex; align-items: center; margin-left: 20px; width: 73px; }
.wb { width: 24px; height: 20px; display: flex; align-items: center; justify-content: center; color: #222; }
.wmin::after { content: ""; width: 8px; height: 2px; background: #222; margin-top: 9px; }
.wmax { width: 10px; height: 10px; border: 1px solid #222; border-top-width: 2px; box-shadow: 2px -2px 0 -1px #fff, 2px -2px 0 0 #222; }
.wclose { font: 15px "DejaVu Sans", sans-serif; }

/* tabs */
.tabs { height: 27px; flex: none; display: flex; background: #c9d9d6; font-size: 13px; color: #333; }
.tab { display: flex; align-items: center; justify-content: center; height: 100%; flex: none; white-space: nowrap; }
.tab.file { width: 75px; margin-right: 2px; padding-right: 9px; background: #5c8b82; color: #fff; }
.tab.active { background: #fff; color: #2e8aa4; }
.tabright { margin-left: auto; display: flex; align-items: center; }
.search { width: 125px; height: 20px; background: #fff; border: 1px solid #a9b2b0; display: flex; align-items: center; justify-content: space-between; padding: 0 2px; color: #9a9a9a; font-size: 11px; }
.tut { margin-left: 5px; font-size: 11px; width: 22px; }
.tabwin { margin-left: 2px; width: 69px; }

/* ribbon */
.ribbon { height: 94px; flex: none; display: flex; padding-top: 5px; background: #fff; border-bottom: 1px solid #dedede; position: relative; }
.group { display: flex; flex-direction: column; height: 85px; border-right: 1px solid #e4e4e4; flex: none; }
.g1 { width: 204px; } .g2 { width: 55px; } .g3 { width: 311px; } .g4 { width: 89px; } .g5 { width: 135px; }
.g6 { width: 67px; } .g7 { width: 130px; } .g8 { width: 172px; } .g9 { width: 151px; } .g10 { width: 184px; }
.gbody { height: 71px; display: flex; align-items: flex-start; }
.glabel { height: 14px; display: flex; align-items: center; color: #3f8da8; }
.glabel span { flex: 1; text-align: center; white-space: nowrap; }
.big { display: flex; flex-direction: column; align-items: center; flex: none; }
.bi { height: 34px; display: flex; align-items: center; justify-content: center; }
.bi.box { width: 38px; border: 1px solid #f0f0f0; border-radius: 2px; }
.bl { margin-top: 3px; height: 14px; line-height: 14px; white-space: nowrap; }
.big .caret { margin-top: 1px; height: 12px; }
.dis .bl { color: #bcbcbc; }
.col { display: flex; flex-direction: column; align-items: center; flex: none; }
.smrow { display: flex; align-items: center; justify-content: center; flex: none; }
.h15 { height: 15px; } .h17 { height: 17px; } .h18 { height: 18px; } .h26 { height: 26px; }
.sel { width: 22px; height: 22px; background: #bfd0ce; display: flex; align-items: center; justify-content: center; }
.wk { gap: 7px; }
.orow { height: 22px; display: flex; align-items: center; gap: 3px; white-space: nowrap; width: 100%; }
.olist { align-items: flex-start; margin-top: -4px; }
.gcgrid { display: flex; flex-direction: column; gap: 13px; padding: 7px 0 0 8px; }
.gcrow { display: flex; align-items: center; gap: 6.500px; }
.gsep { width: 1px; height: 16px; background: #ddd; }
.ribbonend { position: absolute; right: 0; bottom: 3px; height: 14px; }

/* toolbar */
.toolbar { height: 33px; flex: none; display: flex; align-items: center; background: #fff; border-bottom: 2px solid #a4a4a4; position: relative; }
.ti { height: 22px; display: flex; align-items: center; justify-content: center; flex: none; }
.ti.on { background: #c7d5d3; }
.menu { width: 39px; white-space: nowrap; }
.tsep { width: 1px; height: 24px; background: #d8d8d8; flex: none; }
.sel-box { height: 20px; border: 1px solid #ababab; display: flex; align-items: center; justify-content: space-between; padding-left: 2px; flex: none; color: #222; white-space: nowrap; }
.toolend { position: absolute; right: 0; top: 12px; height: 14px; }

/* work area */
.work { height: 838px; flex: none; display: flex; border-bottom: 1px solid #b0b0b0; }
.viewport { width: 1394px; flex: none; }
.scene { width: 1394px; height: 837px; }
.dash2 { stroke-dashoffset: 8; }
.wcs { font: 11px "Liberation Sans", sans-serif; }
.triad { font: 13px "Liberation Sans", sans-serif; }

.nav { width: 488px; flex: none; background: #fff; border-left: 1px solid #9f9f9f; border-right: 1px solid #a8a8a8; padding: 0 5px 0 9px; display: flex; flex-direction: column; }
.navhead { height: 27px; display: flex; align-items: center; gap: 9px; padding-left: 4px; font-size: 12px; color: #222; }
.navbox { width: 12px; height: 11px; border: 2px solid #222; flex: none; }
.navtable { height: 750px; border: 1px solid #dfdfdf; padding: 0 1px; flex: none; display: flex; flex-direction: column; }
.navth { height: 23px; background: #eeeeee; border-bottom: 1px solid #d8d8d8; flex: none; }
.navrows { flex: 1; background: repeating-linear-gradient(#fff 0, #fff 19px, #ebebeb 19px, #ebebeb 20px, #f9f9f9 20px, #f9f9f9 39px, #ebebeb 39px, #ebebeb 40px); }
.navfoot { height: 5px; margin-bottom: 1px; background: #dcdcdc; border: 1px solid #a6a6a6; flex: none; }
.acc { height: 24px; flex: none; border-bottom: 2px solid #cfcfcf; display: flex; align-items: center; justify-content: space-between; padding: 3px 6px 0 8px; font-size: 13.500px; color: #4f87a0; }
.chev { width: 12px; height: 8px; }

.res { width: 31px; flex: none; background: #dfdfdf; display: flex; flex-direction: column; align-items: center; padding-top: 4px; }
.gear { width: 16px; height: 16px; flex: none; margin-bottom: 4px; }
.ri { width: 24px; height: 24px; flex: none; }
.ri.h22 { height: 22px; }
.ractive { width: 100%; height: 53px; background: #fff; display: flex; align-items: center; justify-content: center; flex: none; }

.status { height: 21px; flex: none; background: #fff; display: flex; align-items: center; justify-content: flex-end; padding-right: 54px; }
.taskbar { height: 9px; flex: none; position: relative; overflow: hidden; display: flex;
  background: linear-gradient(#1f7fd0, #1f7fd0) no-repeat 155px 8px / 24px 1px, linear-gradient(#2a7ac0, #2a7ac0) no-repeat 112px 8px / 12px 1px, #0b1521; }
.tactive { width: 48px; margin-left: 45px; background: #3c424b; }
.clock { position: absolute; left: 1857px; top: 1px; color: #fff; font-size: 11px; line-height: 14px; }
.watermark { position: absolute; left: 1631px; top: 954px; width: 70px; height: 82px; }
```
